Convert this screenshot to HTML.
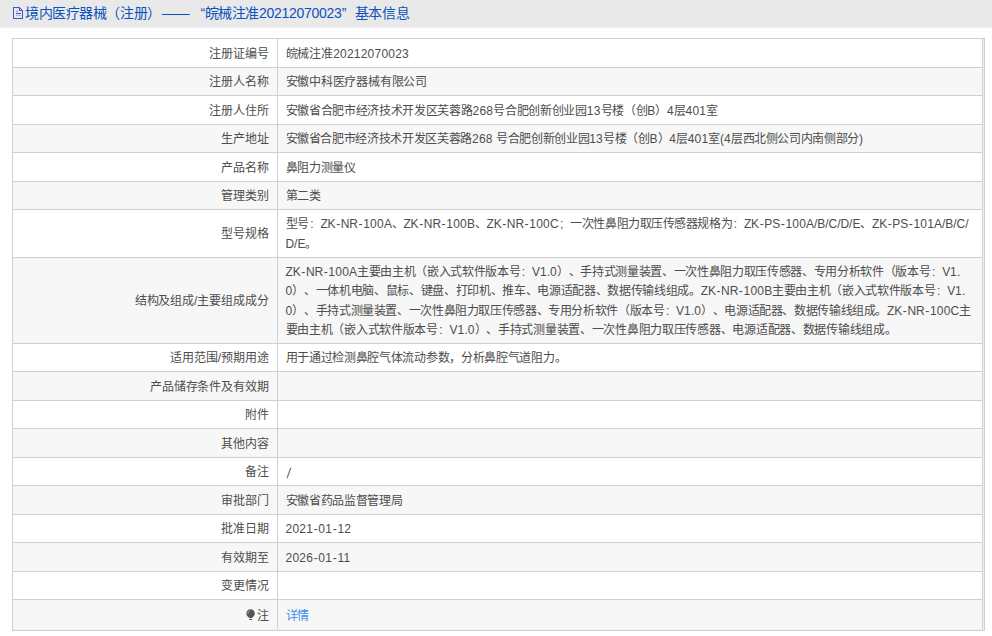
<!DOCTYPE html>
<html lang="zh-CN"><head><meta charset="utf-8">
<style>
html,body{margin:0;padding:0;background:#fff;width:992px;height:636px;overflow:hidden;}
body{text-spacing-trim:space-all;font-family:"Liberation Sans",sans-serif;color:#4d4d4d;}
.hd{position:absolute;left:0;top:0;width:992px;height:27px;background:#e9e9e9;border-bottom:1px solid #eef0f6;}
.hd .t{position:absolute;left:25px;top:4px;font-size:14px;line-height:19px;color:#0a52c0;white-space:nowrap;letter-spacing:-0.42px;}
.hd svg{position:absolute;left:13px;top:7px;}
.box{position:absolute;left:12px;top:38px;width:971px;height:591px;border:1px solid #d0d0d0;background:#eef0f7;}
table{position:absolute;left:0;top:0;width:970px;border-collapse:collapse;font-size:12px;table-layout:fixed;}
td{border-right:1px solid #d0d0d0;border-bottom:1px solid #d0d0d0;padding:0;vertical-align:middle;line-height:19.4px;white-space:nowrap;background:#fff;}
tr.e td{background:#f7f7f7;}
td.l{text-align:right;padding-right:8px;color:#4d4d4d;}
td.v{padding-left:8px;color:#4d4d4d;}
.ln{white-space:nowrap;position:relative;}
.a{letter-spacing:-0.1px;}
.d{letter-spacing:0.22px;}
.h{margin:0 0.65px;letter-spacing:0;}
.hs{margin:0 0.0px;letter-spacing:0;}
.col{margin-left:1.5px;margin-right:6.9px;letter-spacing:0;}
.bulb{vertical-align:-1px;margin-right:1px;}
</style></head><body>
<div class="hd">
<svg width="11" height="13" viewBox="0 0 11 13" shape-rendering="crispEdges"><path d="M0.5 0.5H6.5L9.5 3.5V11.5H0.5Z" fill="none" stroke="#3a56c8" stroke-width="1"/><path d="M6.5 0.5V3.5H9.5" fill="none" stroke="#3a56c8" stroke-width="1"/><path d="M2.5 4.5H5" stroke="#8a9ad8" stroke-width="1"/><path d="M2.5 6.5H8" stroke="#3a56c8" stroke-width="1"/><path d="M2.5 8.5H8" stroke="#a8b4de" stroke-width="1"/></svg>
<div class="t">境内医疗器械（注册）<span style="margin-left:1px">——</span><span style="margin-left:11.5px">“</span>皖械注准<span style="letter-spacing:-0.28px">20212070023</span><span style="margin-right:9px">”</span>基本信息</div>
</div>
<div class="box">
<table><colgroup><col style="width:264px"><col></colgroup>
<tr style="height:28px"><td class="l"><div class="ln" style="top:2px;--ls:-0.15px;letter-spacing:-0.15px">注册证编号</div></td><td class="v"><div style="position:relative;top:2px"><div class="ln" style="--ls:-0.091px;letter-spacing:-0.091px">皖械注准<span class="d">20212070023</span></div></div></td></tr>
<tr class="e" style="height:28px"><td class="l"><div class="ln" style="top:2px;--ls:-0.15px;letter-spacing:-0.15px">注册人名称</div></td><td class="v"><div style="position:relative;top:2px"><div class="ln" style="--ls:-0.209px;letter-spacing:-0.209px">安徽中科医疗器械有限公司</div></div></td></tr>
<tr style="height:29px"><td class="l"><div class="ln" style="top:2px;--ls:-0.15px;letter-spacing:-0.15px">注册人住所</div></td><td class="v"><div style="position:relative;top:2px"><div class="ln" style="--ls:-0.31px;letter-spacing:-0.31px">安徽省合肥市经济技术开发区芙蓉路<span class="d">268</span>号合肥创新创业园<span class="d">13</span>号楼（创<span class="a">B</span>）<span class="d">4</span>层<span class="d">401</span>室</div></div></td></tr>
<tr class="e" style="height:28px"><td class="l"><div class="ln" style="top:2px;--ls:-0.15px;letter-spacing:-0.15px">生产地址</div></td><td class="v"><div style="position:relative;top:2px"><div class="ln" style="--ls:-0.344px;letter-spacing:-0.344px">安徽省合肥市经济技术开发区芙蓉路<span class="d">268</span><span class="a"> </span>号合肥创新创业园<span class="d">13</span>号楼（创<span class="a">B</span>）<span class="d">4</span>层<span class="d">401</span>室<span class="a">(</span><span class="d">4</span>层西北侧公司内南侧部分<span class="a">)</span></div></div></td></tr>
<tr style="height:29px"><td class="l"><div class="ln" style="top:2px;--ls:-0.15px;letter-spacing:-0.15px">产品名称</div></td><td class="v"><div style="position:relative;top:2px"><div class="ln" style="--ls:-0.32px;letter-spacing:-0.32px">鼻阻力测量仪</div></div></td></tr>
<tr class="e" style="height:28px"><td class="l"><div class="ln" style="top:2px;--ls:-0.15px;letter-spacing:-0.15px">管理类别</div></td><td class="v"><div style="position:relative;top:2px"><div class="ln" style="--ls:-0.32px;letter-spacing:-0.32px">第二类</div></div></td></tr>
<tr style="height:48px"><td class="l"><div class="ln" style="top:2px;--ls:-0.15px;letter-spacing:-0.15px">型号规格</div></td><td class="v"><div style="position:relative;top:1.5px"><div class="ln" style="--ls:-0.437px;letter-spacing:-0.437px">型号<span class="col">:</span><span class="a">ZK</span><span class="h">-</span><span class="a">NR</span><span class="h">-</span><span class="d">100</span><span class="a">A</span>、<span class="a">ZK</span><span class="h">-</span><span class="a">NR</span><span class="h">-</span><span class="d">100</span><span class="a">B</span>、<span class="a">ZK</span><span class="h">-</span><span class="a">NR</span><span class="h">-</span><span class="d">100</span><span class="a">C</span><span class="col">;</span>一次性鼻阻力取压传感器规格为<span class="col">:</span><span class="a">ZK</span><span class="h">-</span><span class="a">PS</span><span class="h">-</span><span class="d">100</span><span class="a">A</span><span class="hs">/</span><span class="a">B</span><span class="hs">/</span><span class="a">C</span><span class="hs">/</span><span class="a">D</span><span class="hs">/</span><span class="a">E</span>、<span class="a">ZK</span><span class="h">-</span><span class="a">PS</span><span class="h">-</span><span class="d">101</span><span class="a">A</span><span class="hs">/</span><span class="a">B</span><span class="hs">/</span><span class="a">C</span><span class="hs">/</span></div><div class="ln" style="--ls:-0.32px;letter-spacing:-0.32px"><span class="a">D</span><span class="hs">/</span><span class="a">E</span>。</div></div></td></tr>
<tr class="e" style="height:86px"><td class="l"><div class="ln" style="top:2px;--ls:-0.15px;letter-spacing:-0.15px">结构及组成<span class="hs">/</span>主要组成成分</div></td><td class="v"><div style="position:relative;top:1.5px"><div class="ln" style="--ls:-0.331px;letter-spacing:-0.331px"><span class="a">ZK</span><span class="h">-</span><span class="a">NR</span><span class="h">-</span><span class="d">100</span><span class="a">A</span>主要由主机（嵌入式软件版本号<span class="col">:</span><span class="a">V</span><span class="d">1</span><span class="a">.</span><span class="d">0</span>）、手持式测量装置、一次性鼻阻力取压传感器、专用分析软件（版本号<span class="col">:</span><span class="a">V</span><span class="d">1</span><span class="a">.</span></div><div class="ln" style="--ls:-0.336px;letter-spacing:-0.336px"><span class="d">0</span>）、一体机电脑、鼠标、键盘、打印机、推车、电源适配器、数据传输线组成。<span class="a">ZK</span><span class="h">-</span><span class="a">NR</span><span class="h">-</span><span class="d">100</span><span class="a">B</span>主要由主机（嵌入式软件版本号<span class="col">:</span><span class="a">V</span><span class="d">1</span><span class="a">.</span></div><div class="ln" style="--ls:-0.376px;letter-spacing:-0.376px"><span class="d">0</span>）、手持式测量装置、一次性鼻阻力取压传感器、专用分析软件（版本号<span class="col">:</span><span class="a">V</span><span class="d">1</span><span class="a">.</span><span class="d">0</span>）、电源适配器、数据传输线组成。<span class="a">ZK</span><span class="h">-</span><span class="a">NR</span><span class="h">-</span><span class="d">100</span><span class="a">C</span>主</div><div class="ln" style="--ls:-0.281px;letter-spacing:-0.281px">要由主机（嵌入式软件版本号<span class="col">:</span><span class="a">V</span><span class="d">1</span><span class="a">.</span><span class="d">0</span>）、手持式测量装置、一次性鼻阻力取压传感器、电源适配器、数据传输线组成。</div></div></td></tr>
<tr style="height:28px"><td class="l"><div class="ln" style="top:2px;--ls:-0.15px;letter-spacing:-0.15px">适用范围<span class="hs">/</span>预期用途</div></td><td class="v"><div style="position:relative;top:2px"><div class="ln" style="--ls:-0.302px;letter-spacing:-0.302px">用于通过检测鼻腔气体流动参数，分析鼻腔气道阻力。</div></div></td></tr>
<tr class="e" style="height:29px"><td class="l"><div class="ln" style="top:2px;--ls:-0.15px;letter-spacing:-0.15px">产品储存条件及有效期</div></td><td class="v"><div style="position:relative;top:2px"></div></td></tr>
<tr style="height:28px"><td class="l"><div class="ln" style="top:2px;--ls:-0.15px;letter-spacing:-0.15px">附件</div></td><td class="v"><div style="position:relative;top:2px"></div></td></tr>
<tr class="e" style="height:29px"><td class="l"><div class="ln" style="top:2px;--ls:-0.15px;letter-spacing:-0.15px">其他内容</div></td><td class="v"><div style="position:relative;top:2px"></div></td></tr>
<tr style="height:28px"><td class="l"><div class="ln" style="top:2px;--ls:-0.15px;letter-spacing:-0.15px">备注</div></td><td class="v"><div style="position:relative;top:2px"><div class="ln" style="--ls:-0.32px;letter-spacing:-0.32px"><span style="display:inline-block;transform:translateY(1px) scaleY(1.18) skewX(-9deg);margin-left:1px">/</span></div></div></td></tr>
<tr class="e" style="height:29px"><td class="l"><div class="ln" style="top:2px;--ls:-0.15px;letter-spacing:-0.15px">审批部门</div></td><td class="v"><div style="position:relative;top:2px"><div class="ln" style="--ls:-0.32px;letter-spacing:-0.32px">安徽省药品监督管理局</div></div></td></tr>
<tr style="height:28px"><td class="l"><div class="ln" style="top:2px;--ls:-0.15px;letter-spacing:-0.15px">批准日期</div></td><td class="v"><div style="position:relative;top:2px"><div class="ln" style="--ls:-0.32px;letter-spacing:-0.32px"><span class="d">2021</span><span class="h">-</span><span class="d">01</span><span class="h">-</span><span class="d">12</span></div></div></td></tr>
<tr class="e" style="height:29px"><td class="l"><div class="ln" style="top:2px;--ls:-0.15px;letter-spacing:-0.15px">有效期至</div></td><td class="v"><div style="position:relative;top:2px"><div class="ln" style="--ls:-0.32px;letter-spacing:-0.32px"><span class="d">2026</span><span class="h">-</span><span class="d">01</span><span class="h">-</span><span class="d">11</span></div></div></td></tr>
<tr style="height:28px"><td class="l"><div class="ln" style="top:2px;--ls:-0.15px;letter-spacing:-0.15px">变更情况</div></td><td class="v"><div style="position:relative;top:2px"></div></td></tr>
<tr class="e" style="height:30px"><td class="l" style="border-bottom:none"><div class="ln" style="top:2px;--ls:-0.15px;letter-spacing:-0.15px"><svg class="bulb" width="10" height="12" viewBox="0 0 10 12"><path d="M4.6 0.2C2.1 0.2 0.4 2 0.4 4.4C0.4 6 1.2 7 2.1 7.8C2.6 8.3 2.8 8.6 2.8 9.1H6.4C6.4 8.6 6.6 8.3 7.1 7.8C8 7 8.8 6 8.8 4.4C8.8 2 7.1 0.2 4.6 0.2Z" fill="#555"/><path d="M1.9 5.2C1.8 3.2 2.8 1.9 4.2 1.5" fill="none" stroke="#9aa8c0" stroke-width="0.9"/><rect x="3.2" y="9.9" width="2.8" height="1.1" fill="#555"/></svg>注</div></td><td class="v" style="border-bottom:none"><div style="position:relative;top:2px"><div class="ln" style="--ls:-0.32px;letter-spacing:-0.32px;color:#3a8cf0">详情</div></div></td></tr>
</table>
</div>
</body></html>
